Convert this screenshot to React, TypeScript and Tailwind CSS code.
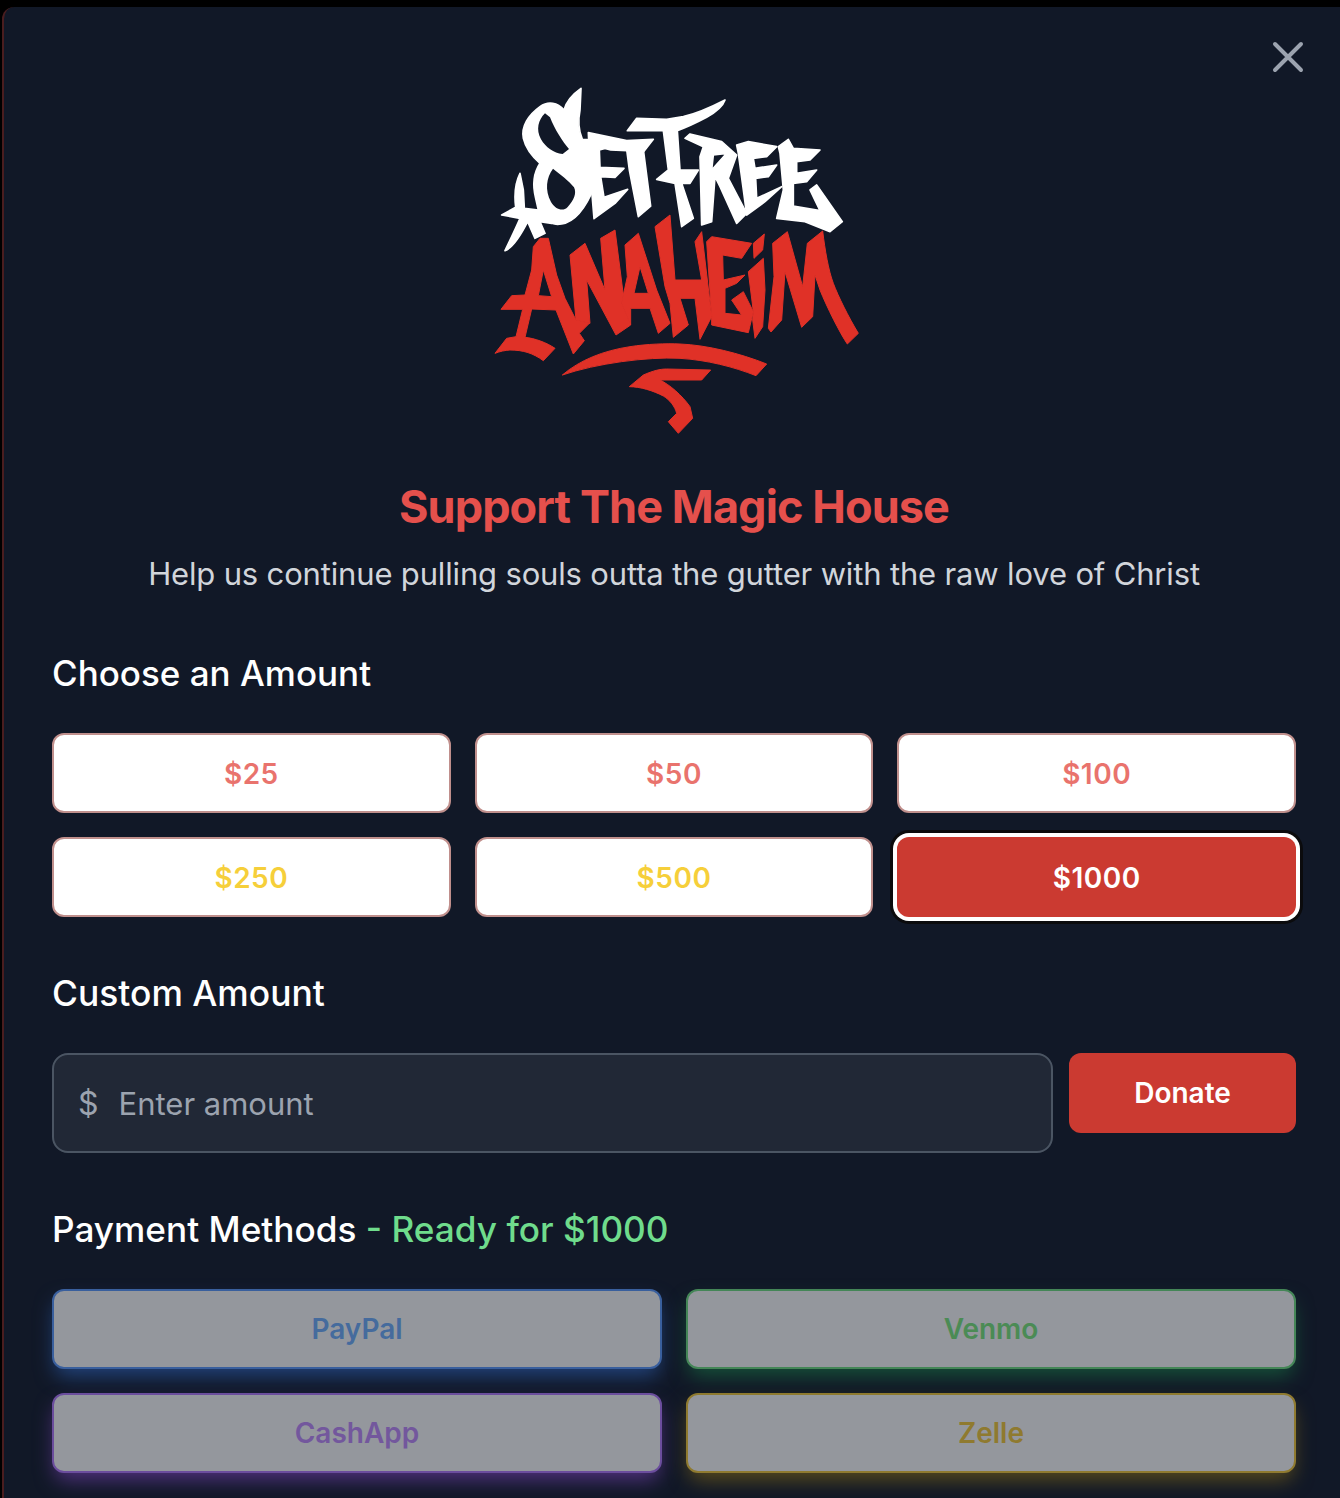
import React from "react";

const RED = "#E03127";

function Logo() {
  return (
    <svg viewBox="-18 0 1200 1140" className="block h-[380px] w-[400px]" aria-label="Set Free Anaheim logo">
      <g fill="#ffffff" stroke="#ffffff" strokeWidth="5" strokeLinejoin="round">
        <g transform="translate(45 30)">
          <path d="M258,25 C225,48 212,70 207,90 C188,68 160,62 135,80 C100,105 78,140 85,175 C92,205 112,230 135,250 C115,280 112,315 122,355 L130,390 L170,430 C180,434 190,434 200,432 C240,425 270,390 298,320 L300,180 L262,178 C250,150 248,125 255,90 Z" />
          <path d="M75,280 C60,310 58,350 62,382 L20,405 L75,415 C60,450 45,480 30,512 C50,505 70,480 98,425 L120,475 L150,460 L135,425 L170,430 L130,390 L88,385 L85,330 Z" />
        </g>
        <path d="M325,188 L440,212 L520,208 L492,244 L392,240 L375,235 L358,240 L360,292 L432,295 L405,322 L362,320 L372,382 L443,358 L405,400 L342,446 L330,300 Z" />
        <path d="M440,238 L490,238 L512,408 L475,440 L448,300 Z" />
        <path d="M442,182 L470,145 L560,148 L610,140 C660,128 700,108 735,90 C730,105 710,125 680,142 C650,158 620,172 592,182 L600,300 L655,300 L630,340 L605,340 L640,445 L605,470 L585,340 L530,328 L565,300 L550,182 Z" />
        <g transform="translate(555 60)">
          <path fillRule="evenodd" d="M60,145 L75,132 L170,155 L215,195 L190,265 L245,370 L215,400 L165,290 L150,260 L140,395 L110,405 L105,200 L115,170 Z M145,195 L185,190 L140,240 Z" />
          <path d="M215,165 L250,155 L335,170 L305,200 L265,205 L270,235 L335,225 L310,260 L272,265 L275,325 L350,290 L300,335 L245,375 L235,300 L220,190 Z" />
          <path d="M340,170 L370,148 L385,175 L465,180 L435,210 L395,215 L395,250 L455,240 L425,275 L385,280 L385,348 L465,362 L435,300 L455,285 L532,395 L495,425 L420,395 L335,385 L355,300 L345,190 Z" />
        </g>
      </g>
      <g transform="translate(45 30)" fill="#111827">
        <path d="M150,100 C130,120 122,148 138,178 C152,202 176,220 203,222 L222,207 C203,185 180,150 165,112 Z" />
        <path d="M174,266 C154,292 149,330 168,366 C182,390 205,395 218,381 C236,362 246,340 237,322 C222,302 196,284 174,266 Z" />
      </g>
      <g fill={RED} stroke={RED} strokeWidth="3" strokeLinejoin="round">
        <g transform="translate(30 480)">
          <path fillRule="evenodd" d="M150,25 L175,25 L200,135 L225,205 L258,270 L298,280 L268,310 L283,332 L250,372 L198,240 L125,237 L105,322 C135,325 170,338 195,355 L160,392 C130,370 100,360 60,360 C45,361 30,364 15,370 L50,325 L78,320 L98,238 L33,238 L65,197 L105,195 L125,120 L130,50 Z M185,200 L145,197 L160,120 Z" />
          <path d="M240,75 L285,40 L345,180 L332,25 L375,0 L400,195 L395,220 L422,285 L378,315 L290,150 L300,280 L258,270 Z" />
          <path fillRule="evenodd" d="M405,45 L445,10 L500,180 L540,280 L505,310 L480,235 L422,235 L422,285 L395,220 L400,195 L412,140 Z M432,190 L475,190 L450,110 Z" />
        </g>
        <g transform="translate(570 450)">
          <path d="M-45,20 L0,-15 L15,180 L95,180 L75,65 L95,35 L125,290 L90,358 L75,235 L30,235 L55,315 L10,352 L0,250 L-15,200 Z" />
          <path d="M110,65 L125,50 L245,70 L215,115 L158,105 L160,180 L225,165 L200,190 L165,205 L165,280 L215,285 L185,240 L220,215 L250,275 L235,338 L125,315 L125,290 Z" />
          <path d="M250,70 L283,42 L278,90 L252,115 Z" />
          <path d="M235,155 L280,115 L285,210 L278,320 L255,355 L248,300 L250,275 Z" />
          <path d="M308,70 L352,35 L398,200 L412,70 L458,33 C465,90 475,150 490,190 C505,230 535,290 565,340 L532,372 C510,340 470,260 450,210 L435,165 L428,290 L395,322 L345,155 L335,300 L303,336 L295,325 L312,170 Z" />
        </g>
        <path d="M247,915 C300,870 370,842 450,830 C500,822 560,820 600,822 C680,825 780,850 860,882 L828,917 C760,890 680,870 600,865 C500,860 350,880 247,915 Z" />
        <path d="M448,950 L490,915 C520,902 540,897 560,897 L692,900 L665,930 L540,930 C570,945 605,975 630,1010 L638,1045 L595,1090 L565,1055 L590,1030 C585,1010 570,990 550,978 C520,962 480,950 448,950 Z" />
      </g>
    </svg>
  );
}

function AmountButton({ label, tone }: { label: string; tone: "red" | "yellow" }) {
  return (
    <button className={`h-20 rounded-xl border-2 border-[#c08f8c] bg-white pt-px text-[28px] font-semibold tracking-[0.5px] ${tone === "red" ? "text-[#e9736d]" : "text-[#f6cf3a]"}`}>
      {label}
    </button>
  );
}

function PayButton({ label, cls }: { label: string; cls: string }) {
  return (
    <button className={`h-20 rounded-xl border-2 bg-white text-[28px] font-semibold opacity-[.55] ${cls}`}>{label}</button>
  );
}

export default function App() {
  return (
    <div className="h-[1498px] w-[1340px] overflow-hidden bg-black pt-[7px] pl-[2px] font-['Inter',sans-serif]">
      <div className="relative h-[1491px] rounded-tl-xl border-l-2 border-[#4a1d1f] bg-[#111827] pr-[44px] pl-[48px]">
        <button className="absolute top-[34px] right-[36px] text-[#9ca3af]" aria-label="Close">
          <svg width="32" height="32" viewBox="0 0 32 32" fill="none" stroke="currentColor" strokeWidth="4" strokeLinecap="round">
            <path d="M3 3 L29 29 M29 3 L3 29" />
          </svg>
        </button>

        <div className="flex justify-center pt-[63px]">
          <Logo />
        </div>

        <h1 className="mt-[27px] text-center text-[45px] leading-[60px] font-bold tracking-[-0.9px] text-[#e5504c]">
          Support The Magic House
        </h1>
        <p className="mt-[15px] text-center text-[31px] leading-[44px] tracking-[-0.16px] text-[#d1d5db]">
          Help us continue pulling souls outta the gutter with the raw love of Christ
        </p>

        <h2 className="mt-[53px] text-[35px] leading-[48px] font-medium text-white">Choose an Amount</h2>
        <div className="mt-[36px] grid grid-cols-3 gap-6">
          <AmountButton label="$25" tone="red" />
          <AmountButton label="$50" tone="red" />
          <AmountButton label="$100" tone="red" />
          <AmountButton label="$250" tone="yellow" />
          <AmountButton label="$500" tone="yellow" />
          <button className="h-20 rounded-xl bg-[#cb3a31] pt-px text-[28px] font-semibold tracking-[0.5px] text-white shadow-[0_0_0_4px_#ffffff,0_0_0_7px_#0b0b0d]">
            $1000
          </button>
        </div>

        <h2 className="mt-[53px] text-[35.4px] leading-[48px] font-medium text-white">Custom Amount</h2>
        <div className="mt-[35px] flex items-start gap-4">
          <div className="flex h-[100px] flex-1 items-center rounded-2xl border-2 border-[#4b5563] bg-[#212836] pt-[2px] pl-[24px] text-[31px] text-[#9ca3af]">
            <span className="text-[32px]">$</span>
            <span className="ml-[20px]">Enter amount</span>
          </div>
          <button className="h-20 w-[227px] rounded-xl bg-[#cb3a31] text-[28px] font-semibold text-white">Donate</button>
        </div>

        <h2 className="mt-[52px] text-[35.2px] leading-[48px] font-medium text-white">
          Payment Methods <span className="text-[#6fdc8c]">- Ready for $1000</span>
        </h2>
        <div className="mt-[36px] grid grid-cols-2 gap-x-6 gap-y-6">
          <PayButton label="PayPal" cls="border-[#5b99ff] text-[#70b0ff] shadow-[0_10px_20px_-3px_rgba(59,130,246,0.75)]" />
          <PayButton label="Venmo" cls="border-[#6fe07f] text-[#7be97b] shadow-[0_10px_20px_-3px_rgba(34,197,94,0.6)]" />
          <PayButton label="CashApp" cls="border-[#b57aff] text-[#c38cff] shadow-[0_10px_20px_-3px_rgba(168,85,247,0.75)]" />
          <PayButton label="Zelle" cls="border-[#f6ca36] text-[#f6ca36] shadow-[0_10px_20px_-3px_rgba(234,179,8,0.6)]" />
        </div>
      </div>
    </div>
  );
}
